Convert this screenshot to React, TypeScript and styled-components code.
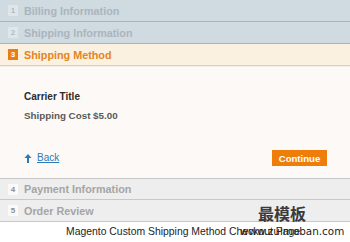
import React from "react";
import styled, { createGlobalStyle } from "styled-components";

const Global = createGlobalStyle`
  html, body { margin: 0; padding: 0; background: #ffffff; }
  body { font-family: "Liberation Sans", Arial, sans-serif; width: 350px; height: 242px; overflow: hidden; }
`;

const Page = styled.div`
  position: relative;
  width: 350px;
  height: 242px;
`;

type Variant = "done" | "active" | "todo";

const Step = styled.div<{ $v: Variant; $first?: boolean }>`
  display: flex;
  align-items: center;
  height: 22px;
  padding-left: 8px;
  gap: 6px;
  box-sizing: border-box;
  background: ${(p) => (p.$v === "done" ? "#d0dae1" : p.$v === "active" ? "#fbf1e1" : "#eeeeee")};
  border-bottom: 1px solid ${(p) => (p.$v === "done" ? "#aab4ba" : p.$v === "active" ? "#d5cfc4" : "#c8c8c8")};
  border-top: ${(p) => (p.$first ? "1px solid #c8c8c8" : "none")};
`;

const Num = styled.span<{ $v: Variant }>`
  display: inline-flex;
  align-items: center;
  justify-content: center;
  width: 10px;
  height: 11px;
  font-size: 8px;
  font-weight: bold;
  background: ${(p) => (p.$v === "done" ? "#dfe6ea" : p.$v === "active" ? "#ea7d18" : "#fafafa")};
  color: ${(p) => (p.$v === "done" ? "#b0bbc1" : p.$v === "active" ? "#ffffff" : "#8e8e8e")};
`;

const Label = styled.span<{ $v: Variant }>`
  font-size: 10.8px;
  font-weight: bold;
  color: ${(p) => (p.$v === "done" ? "#aab5bc" : p.$v === "active" ? "#e48421" : "#a5a5a5")};
`;

const Content = styled.div`
  background: #fcf9f6;
  height: 112px;
  box-sizing: border-box;
  padding: 23px 23px 0 24px;
  border-top: 1px solid #f2eee9;
`;

const Carrier = styled.div`
  font-size: 10px;
  font-weight: bold;
  color: #2b2b2b;
  line-height: 13px;
`;

const Cost = styled.div`
  margin-top: 6px;
  font-size: 9.8px;
  font-weight: bold;
  color: #5a5a5a;
  line-height: 13px;
`;

const Actions = styled.div`
  display: flex;
  justify-content: space-between;
  align-items: center;
  margin-top: 28px;
`;

const BackLink = styled.a`
  display: flex;
  align-items: center;
  gap: 5px;
  font-size: 10px;
  color: #2a7ab8;
  text-decoration: underline;
  margin-top: -1px;
`;

const Continue = styled.button`
  width: 55px;
  height: 16px;
  border: none;
  padding: 0;
  background: #ef7d0a;
  color: #ffffff;
  font-family: "Liberation Sans", Arial, sans-serif;
  font-size: 9.6px;
  font-weight: bold;
`;

const Caption = styled.div`
  text-align: center;
  font-size: 10.4px;
  line-height: 13px;
  color: #222222;
  padding: 3px 0 0 16px;
`;

const MarkCn = styled.div`
  position: absolute;
  left: 258px;
  top: 201px;
  font-family: "Noto Sans CJK SC", "Liberation Serif", serif;
  font-size: 16px;
  font-weight: bold;
  color: #3a3a3a;
`;

const MarkUrl = styled.div`
  position: absolute;
  left: 240px;
  top: 225px;
  font-family: "DejaVu Sans", sans-serif;
  font-size: 10.4px;
  color: #222222;
`;

const UpArrow = () => (
  <svg width="8" height="10" viewBox="0 0 8 10">
    <path d="M4 1 L0.5 5 H3 V10 H5 V5 H7.5 Z" fill="#2a7ab8" />
  </svg>
);

export default function App() {
  return (
    <Page>
      <Global />
      <Step $v="done"><Num $v="done">1</Num><Label $v="done">Billing Information</Label></Step>
      <Step $v="done"><Num $v="done">2</Num><Label $v="done">Shipping Information</Label></Step>
      <Step $v="active"><Num $v="active">3</Num><Label $v="active">Shipping Method</Label></Step>
      <Content>
        <Carrier>Carrier Title</Carrier>
        <Cost>Shipping Cost $5.00</Cost>
        <Actions>
          <BackLink href="#"><UpArrow />Back</BackLink>
          <Continue>Continue</Continue>
        </Actions>
      </Content>
      <Step $v="todo" $first><Num $v="todo">4</Num><Label $v="todo">Payment Information</Label></Step>
      <Step $v="todo"><Num $v="todo">5</Num><Label $v="todo">Order Review</Label></Step>
      <Caption>Magento Custom Shipping Method Checkout Page</Caption>
      <MarkCn>最模板</MarkCn>
      <MarkUrl>www.zuimoban.com</MarkUrl>
    </Page>
  );
}
